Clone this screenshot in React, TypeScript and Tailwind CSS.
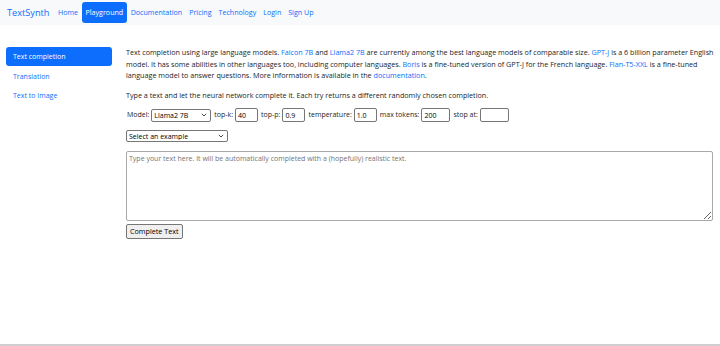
import React from "react"

const font = { fontFamily: '"Open Sans", "Noto Sans", sans-serif' }

function NavLink({ children, active }: { children: React.ReactNode; active?: boolean }) {
    return active ? (
        <a className="px-[4px] py-[5px] rounded-[3px] bg-[#0d6efd] text-white">{children}</a>
    ) : (
        <a className="px-[3.5px] py-[5px] text-[#0d6efd]">{children}</a>
    )
}

function Chevron() {
    return (
        <svg className="absolute right-[4px] top-1/2 -translate-y-1/2 pointer-events-none" width="6" height="4" viewBox="0 0 6 4">
            <path d="M0.8 0.8 L3 3 L5.2 0.8" fill="none" stroke="#333" strokeWidth="0.9" />
        </svg>
    )
}

function Select({ value, w, h, className = "" }: { value: string; w: string; h: string; className?: string }) {
    return (
        <div className={`relative ${className}`}>
            <select
                className={`${w} ${h} appearance-none bg-white border border-[#767676] rounded-[2px] text-[7px] leading-none text-black pl-[2px] outline-none`}
                style={font}
            >
                <option>{value}</option>
            </select>
            <Chevron />
        </div>
    )
}

function Field({ label, value, w = "w-[23px]" }: { label: string; value: string; w?: string }) {
    return (
        <>
            <span className="mr-[2px]">{label}</span>
            <input
                defaultValue={value}
                className={`${w} h-[14px] border border-[#767676] rounded-[2px] px-[2px] text-[7px] text-black mr-[3px] outline-none`}
                style={font}
            />
        </>
    )
}

export default function App() {
    return (
        <div className="w-[720px] h-[346px] bg-white text-[#212529] flex flex-col text-[7.2px] leading-[11.5px]" style={font}>
            {/* Navbar */}
            <nav className="h-[25px] bg-[#f8f9fa] flex items-center pl-[7px]">
                <span className="text-[9.2px] text-[#0d6efd] mr-[5px]">TextSynth</span>
                <div className="flex items-center text-[7.1px]">
                    <NavLink>Home</NavLink>
                    <NavLink active>Playground</NavLink>
                    <NavLink>Documentation</NavLink>
                    <NavLink>Pricing</NavLink>
                    <NavLink>Technology</NavLink>
                    <NavLink>Login</NavLink>
                    <NavLink>Sign Up</NavLink>
                </div>
            </nav>

            <div className="flex flex-1 pt-[22px]">
                {/* Sidebar */}
                <aside className="w-[106px] ml-[6px] flex flex-col text-[7px]">
                    <a className="h-[19px] flex items-center px-[7px] rounded-[3px] bg-[#0d6efd] text-white">Text completion</a>
                    <a className="h-[19px] flex items-center px-[7px] text-[#0d6efd] mt-[1px]">Translation</a>
                    <a className="h-[19px] flex items-center px-[7px] text-[#0d6efd]">Text to Image</a>
                </aside>

                {/* Main */}
                <main className="ml-[14px] w-[588px]">
                    <p className="mb-[8px]">
                        Text completion using large language models. <a className="text-[#0d6efd]">Falcon 7B</a> and{" "}
                        <a className="text-[#0d6efd]">Llama2 7B</a> are currently among the best language models of comparable size.{" "}
                        <a className="text-[#0d6efd]">GPT-J</a> is a 6 billion parameter English model. It has some abilities in other
                        languages too, including computer languages. <a className="text-[#0d6efd]">Boris</a> is a fine-tuned version of
                        GPT-J for the French language. <a className="text-[#0d6efd]">Flan-T5-XXL</a> is a fine-tuned language model to
                        answer questions. More information is available in the <a className="text-[#0d6efd]">documentation</a>.
                    </p>
                    <p className="mb-[7px]">
                        Type a text and let the neural network complete it. Each try returns a different randomly chosen completion.
                    </p>

                    <div className="flex items-center h-[14px] mb-[8px] text-[7px]">
                        <span className="mr-[2px] ml-[1px]">Model:</span>
                        <Select value="Llama2 7B" w="w-[60px]" h="h-[13px]" className="mr-[3px]" />
                        <Field label="top-k:" value="40" />
                        <Field label="top-p:" value="0.9" />
                        <Field label="temperature:" value="1.0" />
                        <Field label="max tokens:" value="200" w="w-[29px]" />
                        <Field label="stop at:" value="" w="w-[29px]" />
                    </div>

                    <Select value="Select an example" w="w-[102px]" h="h-[12px]" className="mb-[9px] w-fit" />

                    <textarea
                        placeholder="Type your text here. It will be automatically completed with a (hopefully) realistic text."
                        className="block w-[587px] h-[70px] border border-[#a9a9a9] rounded-[2px] px-[2px] py-[2px] text-[7px] leading-[10px] placeholder:text-[#757575] outline-none"
                        style={font}
                    />
                    <button
                        className="mt-[3px] h-[15px] px-[3px] border border-[#767676] rounded-[2px] bg-[#efefef] text-[7.2px] text-black"
                        style={font}
                    >
                        Complete Text
                    </button>
                </main>
            </div>
            <div className="h-[2px] bg-[#cfcfcf]" />
        </div>
    )
}
